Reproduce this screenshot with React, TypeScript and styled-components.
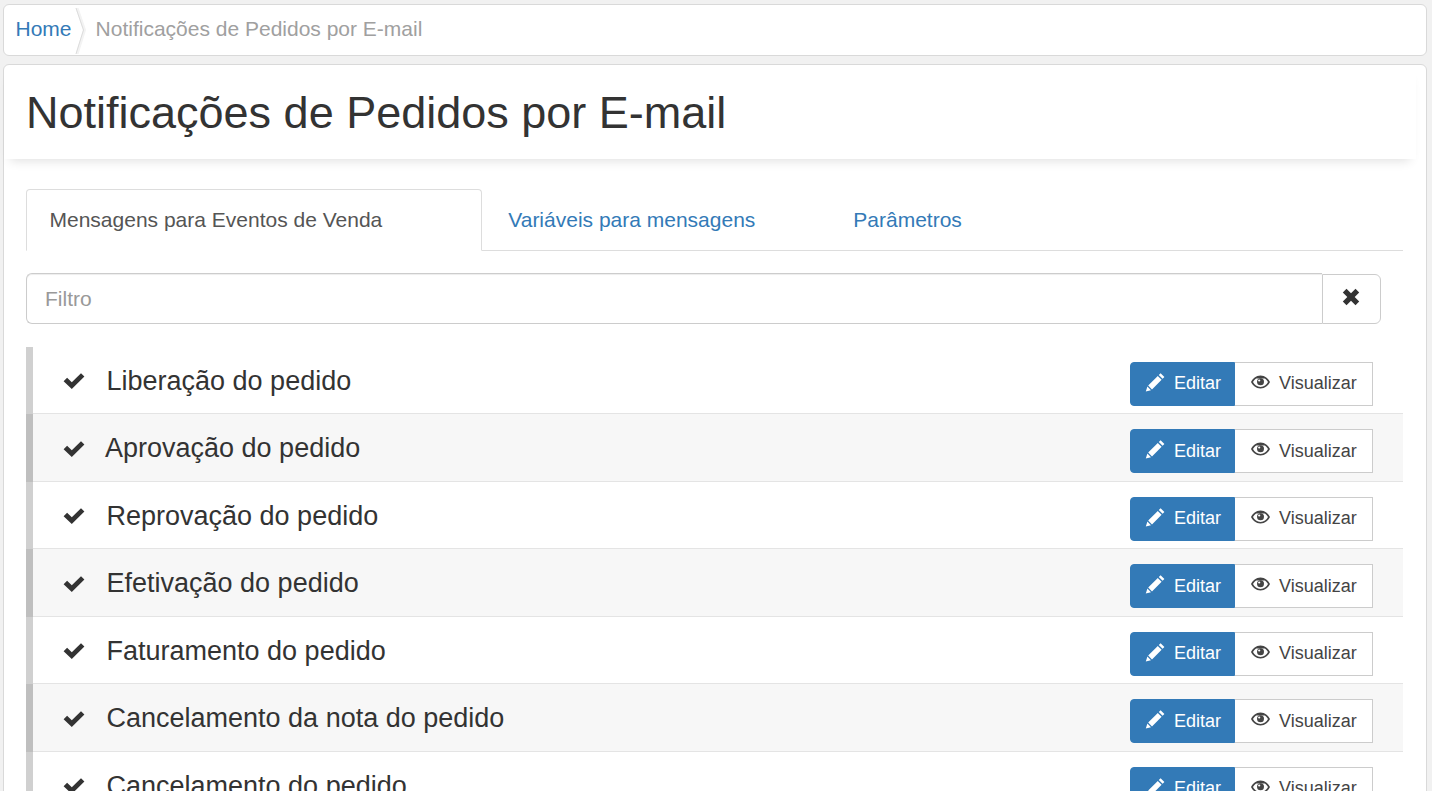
import React from "react";
import styled, { createGlobalStyle } from "styled-components";

const Global = createGlobalStyle`
  html, body { margin: 0; padding: 0; height: 100%; overflow: hidden; background: #f1f1f1; }
  body { font-family: "Liberation Sans", Arial, sans-serif; color: #333; }
  * { box-sizing: border-box; }
`;

const Page = styled.div`
  height: 791px;
  overflow: hidden;
  padding: 4px 5px 0 3px;
  display: flex;
  flex-direction: column;
  gap: 8px;
`;

const Breadcrumb = styled.nav`
  height: 52px;
  flex: none;
  background: #fff;
  border: 1px solid #d9d9d9;
  border-radius: 6px;
  display: flex;
  align-items: center;
  padding-left: 11.5px;
  font-size: 21px;
`;

const Crumb = styled.a`
  color: #337ab7;
  text-decoration: none;
  margin-bottom: 2px;
`;

const Chevron = styled.svg`
  width: 12px;
  height: 46px;
  margin: 2px 8.5px 0 3.5px;
  flex: none;
`;

const Current = styled.span`
  color: #a0a0a0;
  margin-bottom: 2px;
`;

const Card = styled.main`
  flex: 1;
  background: #fff;
  border: 1px solid #d9d9d9;
  border-radius: 6px 6px 0 0;
  display: flex;
  flex-direction: column;
`;

const Header = styled.header`
  height: 94px;
  flex: none;
  padding-left: 22px;
  margin-right: 10px;
  display: flex;
  align-items: center;
  border-radius: 6px 6px 0 0;
  box-shadow: 0 8px 10px -6px rgba(0, 0, 0, 0.12);
`;

const Title = styled.h1`
  margin: 1px 0 0;
  font-size: 45px;
  font-weight: 400;
  line-height: 1.1;
  color: #333;
`;

const Body = styled.section`
  padding: 30px 23px 0 22px;
  flex: 1;
`;

const Tabs = styled.div`
  display: flex;
  height: 62px;
  border-bottom: 1px solid #ddd;
  font-size: 21px;
  margin-bottom: 22px;
`;

const Tab = styled.a<{ $active?: boolean; $gap?: number }>`
  display: flex;
  align-items: center;
  height: 62px;
  padding: ${(p) => (p.$active ? "0 99px 0 22.5px" : "0 25px")};
  margin-right: ${(p) => p.$gap ?? 0}px;
  color: ${(p) => (p.$active ? "#555" : "#337ab7")};
  background: ${(p) => (p.$active ? "#fff" : "transparent")};
  border: 1px solid ${(p) => (p.$active ? "#ddd" : "transparent")};
  border-bottom-color: ${(p) => (p.$active ? "#fff" : "transparent")};
  border-radius: 4px 4px 0 0;
`;

const FilterGroup = styled.div`
  display: flex;
  align-items: flex-end;
  height: 51px;
  margin-right: 22px;
  margin-bottom: 22.5px;
`;

const FilterInput = styled.input`
  flex: 1;
  min-width: 0;
  height: 51px;
  border: 1px solid #ccc;
  border-right: 0;
  border-radius: 6px 0 0 6px;
  padding: 0 18px;
  font: 21px "Liberation Sans", Arial, sans-serif;
  color: #555;
  box-shadow: inset 0 1px 1px rgba(0, 0, 0, 0.075);
  outline: none;
  &::placeholder { color: #999; opacity: 1; }
`;

const ClearButton = styled.button`
  width: 59px;
  height: 50px;
  flex: none;
  background: #fff;
  border: 1px solid #ccc;
  border-radius: 0 6px 6px 0;
  display: flex;
  align-items: center;
  justify-content: center;
  padding: 0 2px 4px 0;
  color: #333;
`;

const Row = styled.div<{ $odd: boolean }>`
  height: 67.5px;
  display: flex;
  align-items: center;
  padding-right: 30px;
  background: ${(p) => (p.$odd ? "#f7f7f7" : "#fff")};
  border-left: 7px solid ${(p) => (p.$odd ? "#bfbfbf" : "#d0d0d0")};
  position: relative;
  &::after {
    content: "";
    position: absolute;
    left: 0;
    right: 0;
    bottom: 0;
    height: 1px;
    background: #e4e4e4;
  }
`;

const CheckIcon = styled.svg`
  width: 22px;
  height: 18px;
  margin-left: 30px;
  flex: none;
  color: #333;
`;

const RowLabel = styled.span<{ $indent: number }>`
  font-size: 27px;
  margin-left: ${(p) => p.$indent}px;
  margin-top: 2px;
  color: #333;
`;

const ButtonGroup = styled.div`
  margin-left: auto;
  display: flex;
  height: 44px;
  margin-top: 7px;
`;

const EditButton = styled.button`
  width: 105px;
  height: 44px;
  background: #337ab7;
  color: #fff;
  border: 1px solid #337ab7;
  border-radius: 4px 0 0 4px;
  font: 18px "Liberation Sans", Arial, sans-serif;
  display: flex;
  align-items: center;
  padding: 0 0 0 14px;
  gap: 8px;
`;

const ViewButton = styled.button`
  width: 138px;
  height: 44px;
  background: #fff;
  color: #444;
  border: 1px solid #ccc;
  border-left: 0;
  font: 18px "Liberation Sans", Arial, sans-serif;
  display: flex;
  align-items: center;
  padding: 0 0 0 16px;
  gap: 9px;
`;

const BtnIcon = styled.svg`
  flex: none;
  margin-top: -4px;
`;

const CheckGlyph = () => (
  <CheckIcon viewBox="0 0 22 18">
    <path fill="currentColor" d="M.6 10.2 4.1 6.8l4.7 4.5L18 2.2 21.4 5.6 8.8 18z" />
  </CheckIcon>
);

const Pencil = () => (
  <BtnIcon width="21" height="20" viewBox="0 0 21 20">
    <path fill="currentColor" d="M15.6 1.2 19.4 5 17.6 6.8 13.8 3zM12.8 4l3.8 3.8L7 17.4 3.2 13.6zM2.4 14.6l3.6 3.6L.8 19.6z" />
  </BtnIcon>
);

const Eye = () => (
  <BtnIcon width="19" height="14" viewBox="0 0 19 14">
    <path
      fill="currentColor"
      fillRule="evenodd"
      d="M9.5.5C14 .5 17.3 3.5 19 7c-1.700 3.500-5 6.500-9.500 6.500S1.700 10.500 0 7C1.700 3.500 5 .5 9.500.5zM5.200 3.600C4.300 4.200 3.200 5.200 2 7c1.500 2.700 4 5 7.500 5s6-2.300 7.500-5c-1.200-1.800-2.300-2.800-3.200-3.400z"
    />
    <circle cx="9.5" cy="6.8" r="3.5" fill="currentColor" />
    <circle cx="8.2" cy="5.5" r="1.1" fill="#fff" />
  </BtnIcon>
);

const Times = () => (
  <svg width="18" height="18" viewBox="0 0 18 18">
    <path fill="currentColor" d="M4.5.8 9 5.3 13.5.8 17.2 4.5 12.7 9 17.2 13.500 13.500 17.200 9 12.700 4.500 17.200.8 13.500 5.300 9 .8 4.500z" />
  </svg>
);

const events = [
  { name: "Liberação do pedido", indent: 21.5 },
  { name: "Aprovação do pedido", indent: 20 },
  { name: "Reprovação do pedido", indent: 21.5 },
  { name: "Efetivação do pedido", indent: 21.5 },
  { name: "Faturamento do pedido", indent: 21.5 },
  { name: "Cancelamento da nota do pedido", indent: 21.5 },
  { name: "Cancelamento do pedido", indent: 21.5 },
];

export default function App() {
  return (
    <>
      <Global />
      <Page>
        <Breadcrumb>
          <Crumb>Home</Crumb>
          <Chevron viewBox="0 0 12 46">
            <path d="M2 0 9.5 22 2 46" fill="none" stroke="#f3f3f3" strokeWidth="3" />
            <path d="M1 0 8.5 22 1 46" fill="none" stroke="#dcdcdc" strokeWidth="1" />
          </Chevron>
          <Current>Notificações de Pedidos por E-mail</Current>
        </Breadcrumb>
        <Card>
          <Header>
            <Title>Notificações de Pedidos por E-mail</Title>
          </Header>
          <Body>
            <Tabs>
              <Tab $active>Mensagens para Eventos de Venda</Tab>
              <Tab $gap={46}>Variáveis para mensagens</Tab>
              <Tab>Parâmetros</Tab>
            </Tabs>
            <FilterGroup>
              <FilterInput placeholder="Filtro" />
              <ClearButton aria-label="Limpar">
                <Times />
              </ClearButton>
            </FilterGroup>
            {events.map((event, i) => (
              <Row key={event.name} $odd={i % 2 === 1}>
                <CheckGlyph />
                <RowLabel $indent={event.indent}>{event.name}</RowLabel>
                <ButtonGroup>
                  <EditButton>
                    <Pencil />
                    Editar
                  </EditButton>
                  <ViewButton>
                    <Eye />
                    Visualizar
                  </ViewButton>
                </ButtonGroup>
              </Row>
            ))}
          </Body>
        </Card>
      </Page>
    </>
  );
}
